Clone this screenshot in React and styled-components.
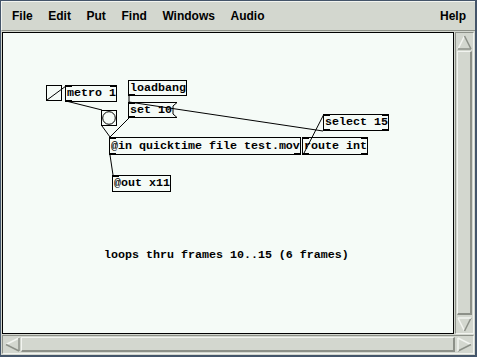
import React from 'react';
import styled, { createGlobalStyle } from 'styled-components';

const BG = '#d3d7cf';
const LIGHT = '#f2f4f0';
const DARK = '#8c9088';
const FRAME = '#44556a';
const CANVAS = '#f5fbf7';

const Global = createGlobalStyle`
  * { box-sizing: border-box; }
  html, body { margin: 0; padding: 0; background: ${FRAME}; overflow: hidden; }
`;

const Window = styled.div`
  width: 477px;
  height: 357px;
  border-style: solid;
  border-color: ${FRAME};
  border-width: 1px 2px 2px 1px;
  background: ${BG};
  display: flex;
  flex-direction: column;
`;

const MenuBar = styled.div`
  height: 30px;
  display: flex;
  align-items: center;
  gap: 15.6px;
  padding: 0 9px 1px 10px;
  border-top: 1px solid ${LIGHT};
  border-left: 1px solid ${LIGHT};
  border-bottom: 1px solid ${DARK};
  font-family: "Liberation Sans", Arial, sans-serif;
  font-weight: bold;
  font-size: 12px;
  color: #000;
`;

const MenuItem = styled.span`
  margin-left: ${(p) => (p.$right ? 'auto' : '0')};
`;

const Middle = styled.div`
  display: flex;
  gap: 1px;
  padding: 1px 1px 0 1px;
  height: 303px;
`;

const Canvas = styled.div`
  position: relative;
  width: 452px;
  height: 302px;
  border: 1px solid #000;
  background: ${CANVAS};
  overflow: hidden;
`;

const Trough = styled.div`
  display: flex;
  flex-direction: ${(p) => (p.$vertical ? 'column' : 'row')};
  border-style: solid;
  border-width: 1px;
  border-color: ${DARK} ${LIGHT} ${LIGHT} ${DARK};
  padding: 1px;
  gap: 1px;
  background: ${BG};
`;

const VTrough = styled(Trough)`
  width: 19px;
  height: 302px;
`;

const HTrough = styled(Trough)`
  margin: 1px 1px 1px 1px;
  height: 19px;
`;

const ArrowBox = styled.div`
  flex: none;
  width: ${(p) => (p.$vertical ? '15px' : '16px')};
  height: ${(p) => (p.$vertical ? '16px' : '15px')};
  display: flex;
  align-items: center;
  justify-content: center;
`;

const Slider = styled.div`
  flex: 1;
  border-style: solid;
  border-width: 1px 2px 2px 1px;
  border-color: ${LIGHT} ${DARK} ${DARK} ${LIGHT};
  background: ${BG};
`;

const Arrow = ({ dir }) => {
  const s = 15;
  const pts = {
    up: { a: [7.5, 1], b: [1, 14], c: [14, 14] },
    down: { a: [7.5, 14], b: [1, 1], c: [14, 1] },
    left: { a: [1, 7.5], b: [14, 1], c: [14, 14] },
    right: { a: [14, 7.5], b: [1, 1], c: [1, 14] },
  }[dir];
  const { a, b, c } = pts;
  const lightFirst = dir === 'up' || dir === 'left';
  return (
    <svg width={s} height={s} viewBox={`0 0 ${s} ${s}`}>
      <polygon points={`${a} ${b} ${c}`} fill={BG} />
      <line x1={a[0]} y1={a[1]} x2={b[0]} y2={b[1]} stroke={LIGHT} strokeWidth="1.5" />
      <line x1={a[0]} y1={a[1]} x2={c[0]} y2={c[1]} stroke={DARK} strokeWidth="1.5" />
      <line x1={b[0]} y1={b[1]} x2={c[0]} y2={c[1]} stroke={lightFirst ? DARK : LIGHT} strokeWidth="1.5" />
    </svg>
  );
};

const mono = `"Liberation Mono", "Courier New", monospace`;

const Node = styled.div`
  position: absolute;
  left: ${(p) => p.$x}px;
  top: ${(p) => p.$y}px;
  width: ${(p) => p.$w}px;
  height: ${(p) => p.$h}px;
`;

const ObjBox = styled(Node)`
  border: 1px solid #000;
  background: ${CANVAS};
  font-family: ${mono};
  font-weight: bold;
  font-size: 11.67px;
  line-height: ${(p) => p.$h - 2}px;
  padding-left: 1px;
  white-space: nowrap;
  color: #000;
`;

const Port = styled.span`
  position: absolute;
  width: 7px;
  height: 2px;
  background: #000;
  ${(p) => (p.$bottom ? 'bottom: -1px;' : 'top: -1px;')}
  ${(p) => (p.$right ? 'right: -1px;' : 'left: -1px;')}
`;

const MsgText = styled.span`
  position: absolute;
  left: 2px;
  top: 0;
  font-family: ${mono};
  font-weight: bold;
  font-size: 11.67px;
  line-height: ${(p) => p.$h}px;
  white-space: nowrap;
  color: #000;
`;

const Outline = styled.svg`
  position: absolute;
  left: 0;
  top: 0;
  overflow: visible;
`;

const GuiBox = styled(Node)`
  border: 1px solid #000;
  background: ${CANVAS};
`;

const Comment = styled.div`
  position: absolute;
  left: ${(p) => p.$x}px;
  top: ${(p) => p.$y}px;
  font-family: ${mono};
  font-weight: bold;
  font-size: 11.67px;
  line-height: 14px;
  white-space: nowrap;
  color: #000;
`;

const Wires = styled.svg`
  position: absolute;
  left: 0;
  top: 0;
  pointer-events: none;
`;

const objects = [
  { text: 'metro 1', x: 62, y: 52, w: 52, h: 17, ports: ['tl', 'tr', 'bl'] },
  { text: 'loadbang', x: 125, y: 47, w: 59, h: 16, ports: ['bl'] },
  { text: '@in quicktime file test.mov', x: 106, y: 104, w: 192, h: 18, ports: ['tl', 'bl', 'br'] },
  { text: 'route int', x: 299, y: 104, w: 66, h: 18, ports: ['tl', 'tr', 'bl', 'br'] },
  { text: 'select 15', x: 320, y: 81, w: 66, h: 17, ports: ['tl', 'tr', 'bl', 'br'] },
  { text: '@out x11', x: 109, y: 142, w: 59, h: 17, ports: ['tl'] },
];

const wires = [
  [44, 67, 63, 53],
  [63, 68, 99, 77],
  [99, 93, 107, 104],
  [126, 85, 107, 104],
  [126, 63, 126, 69],
  [320, 98, 126, 69],
  [300, 122, 321, 81],
  [107, 122, 110, 142],
];

const Message = ({ text, x, y, w, h }) => (
  <Node $x={x} $y={y} $w={w + 5} $h={h}>
    <Outline width={w + 5} height={h}>
      <polygon
        points={`0.5,0.5 ${w + 4},0.5 ${w},4 ${w},${h - 4} ${w + 4},${h - 0.5} 0.5,${h - 0.5}`}
        fill={CANVAS}
        stroke="#000"
        strokeWidth="1"
      />
      <rect x="0" y="0" width="7" height="2" fill="#000" />
      <rect x="0" y={h - 2} width="7" height="2" fill="#000" />
    </Outline>
    <MsgText $h={h}>{text}</MsgText>
  </Node>
);

export default function App() {
  return (
    <>
      <Global />
      <Window>
        <MenuBar>
          <MenuItem>File</MenuItem>
          <MenuItem>Edit</MenuItem>
          <MenuItem>Put</MenuItem>
          <MenuItem>Find</MenuItem>
          <MenuItem>Windows</MenuItem>
          <MenuItem>Audio</MenuItem>
          <MenuItem $right>Help</MenuItem>
        </MenuBar>
        <Middle>
          <Canvas>
            <GuiBox $x={43} $y={52} $w={16} $h={16} />
            <GuiBox $x={98} $y={77} $w={16} $h={16}>
              <svg width="14" height="14" viewBox="0 0 14 14">
                <circle cx="7" cy="7" r="6.3" fill="none" stroke="#000" strokeWidth="1" />
              </svg>
            </GuiBox>
            {objects.map((o) => (
              <ObjBox key={o.text} $x={o.x} $y={o.y} $w={o.w} $h={o.h}>
                {o.text}
                {o.ports.map((p) => (
                  <Port key={p} $bottom={p[0] === 'b'} $right={p[1] === 'r'} />
                ))}
              </ObjBox>
            ))}
            <Message text="set 10" x={125} y={69} w={45} h={16} />
            <Comment $x={101} $y={215}>loops thru frames 10..15 (6 frames)</Comment>
            <Wires width="450" height="300">
              {wires.map((w, i) => (
                <line key={i} x1={w[0]} y1={w[1]} x2={w[2]} y2={w[3]} stroke="#000" strokeWidth="1" />
              ))}
            </Wires>
          </Canvas>
          <VTrough $vertical>
            <ArrowBox $vertical>
              <Arrow dir="up" />
            </ArrowBox>
            <Slider />
            <ArrowBox $vertical>
              <Arrow dir="down" />
            </ArrowBox>
          </VTrough>
        </Middle>
        <HTrough>
          <ArrowBox>
            <Arrow dir="left" />
          </ArrowBox>
          <Slider />
          <ArrowBox>
            <Arrow dir="right" />
          </ArrowBox>
        </HTrough>
      </Window>
    </>
  );
}
